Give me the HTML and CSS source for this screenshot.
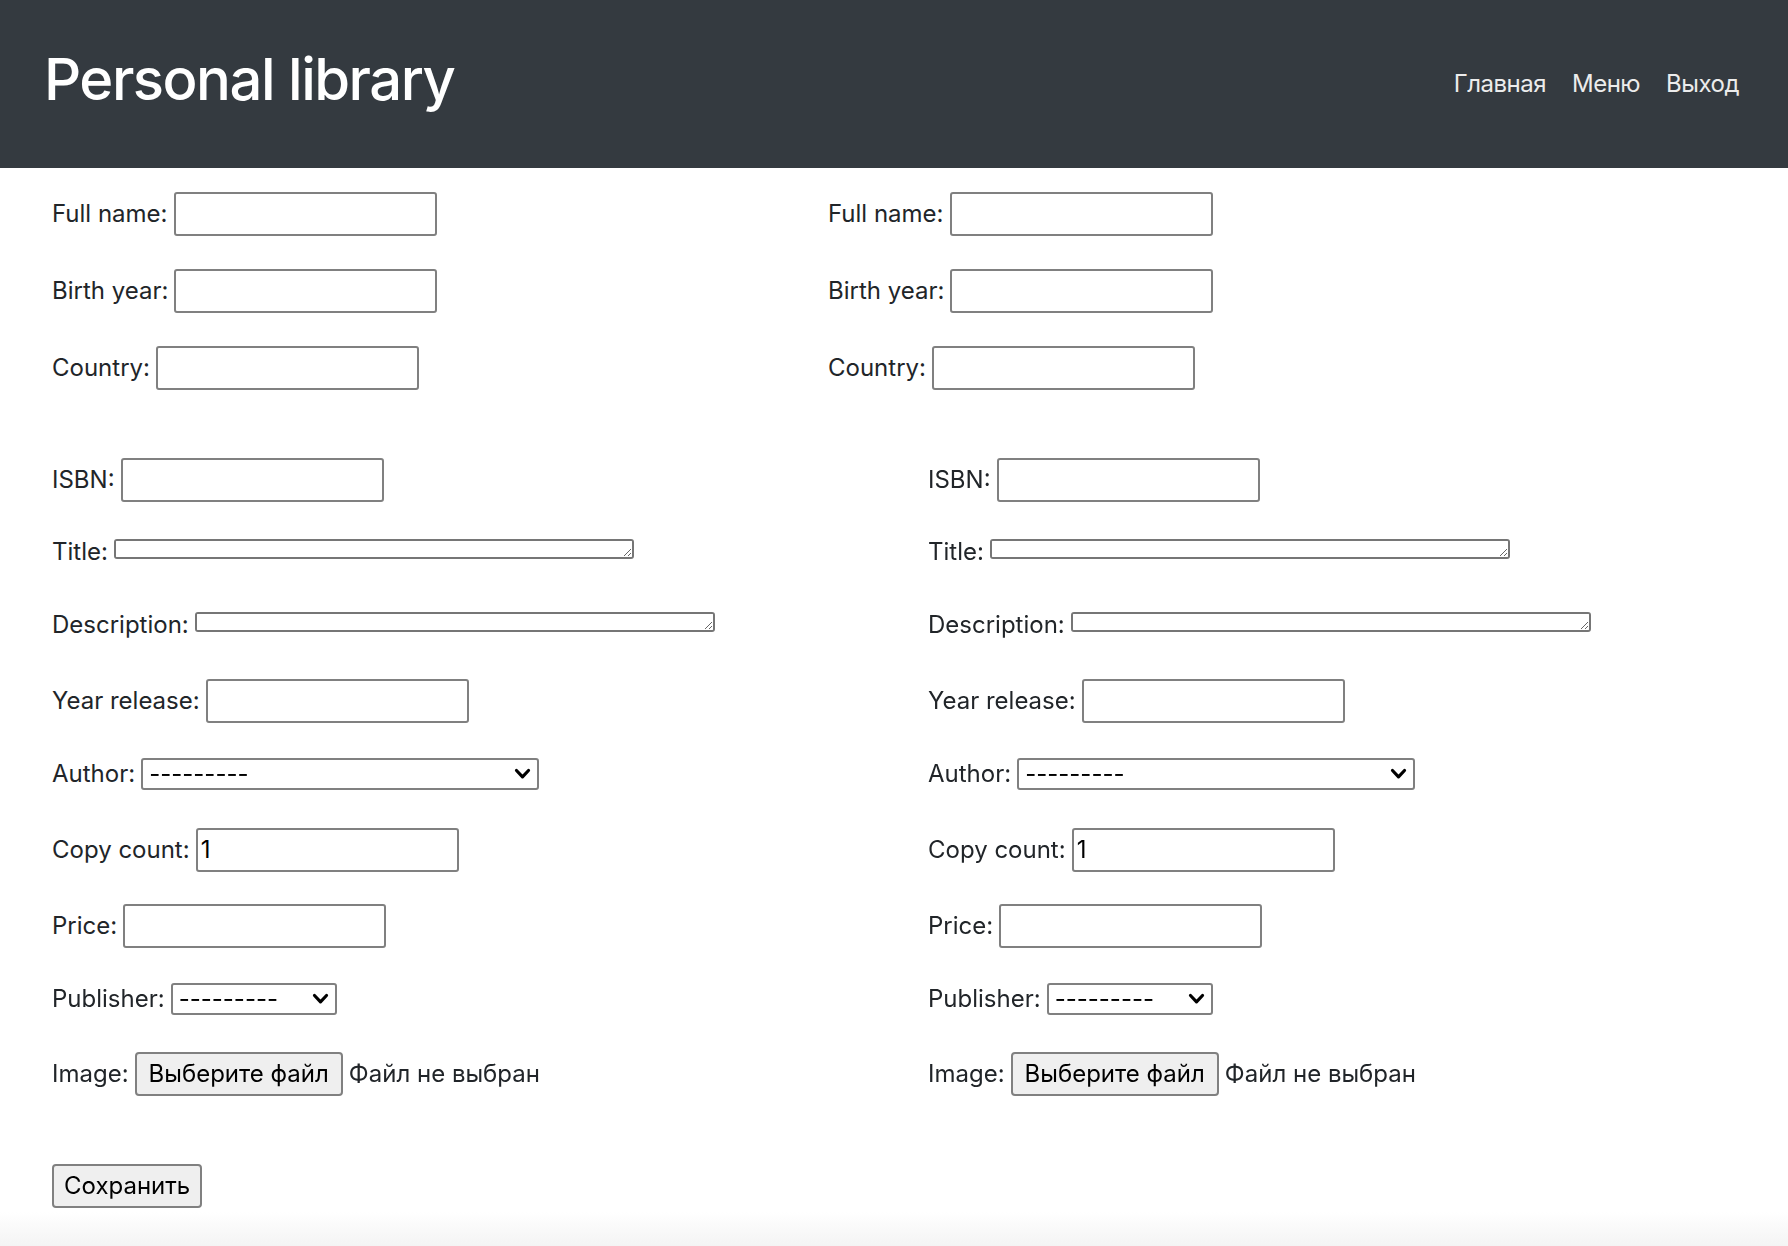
FILE: index.html
```html
<!DOCTYPE html>
<html lang="ru">
<head>
<meta charset="utf-8">
<title>Personal library</title>
<link rel="stylesheet" href="styles.css">
</head>
<body>
<header class="navbar">
  <a class="brand" href="#">Personal library</a>
  <nav class="nav">
    <a class="nav-link" href="#">Главная</a>
    <a class="nav-link" href="#">Меню</a>
    <a class="nav-link" href="#">Выход</a>
  </nav>
</header>
<main class="content">
  <form class="form">
    <section class="pair pair-authors">
      <div class="fields">
        <p class="row row-tall"><label>Full name:</label><input class="text-input" type="text"></p>
        <p class="row row-tall"><label>Birth year:</label><input class="text-input" type="text"></p>
        <p class="row row-tall"><label>Country:</label><input class="text-input" type="text"></p>
      </div>
      <div class="fields">
        <p class="row row-tall"><label>Full name:</label><input class="text-input" type="text"></p>
        <p class="row row-tall"><label>Birth year:</label><input class="text-input" type="text"></p>
        <p class="row row-tall"><label>Country:</label><input class="text-input" type="text"></p>
      </div>
    </section>
    <section class="pair pair-books">
      <div class="fields">
        <p class="row row-tall"><label>ISBN:</label><input class="text-input" type="text"></p>
        <p class="row row-area"><label>Title:</label><textarea class="text-area"></textarea></p>
        <p class="row row-area"><label>Description:</label><textarea class="text-area"></textarea></p>
        <p class="row row-tall"><label>Year release:</label><input class="text-input" type="text"></p>
        <p class="row row-select"><label>Author:</label><span class="select-wrap"><select class="select select-author"><option>---------</option></select><svg class="chevron" viewBox="0 0 17 12"><path d="M2.5 2.5 L8.5 8.8 L14.5 2.5" fill="none" stroke="#000" stroke-width="3.2" stroke-linecap="round" stroke-linejoin="round"/></svg></span></p>
        <p class="row row-tall"><label>Copy count:</label><input class="text-input" type="text" value="1"></p>
        <p class="row row-tall"><label>Price:</label><input class="text-input" type="text"></p>
        <p class="row row-select"><label>Publisher:</label><span class="select-wrap"><select class="select select-publisher"><option>---------</option></select><svg class="chevron" viewBox="0 0 17 12"><path d="M2.5 2.5 L8.5 8.8 L14.5 2.5" fill="none" stroke="#000" stroke-width="3.2" stroke-linecap="round" stroke-linejoin="round"/></svg></span></p>
        <p class="row row-tall"><label>Image:</label><button class="btn" type="button">Выберите файл</button><span class="file-status">Файл не выбран</span></p>
      </div>
      <div class="fields">
        <p class="row row-tall"><label>ISBN:</label><input class="text-input" type="text"></p>
        <p class="row row-area"><label>Title:</label><textarea class="text-area"></textarea></p>
        <p class="row row-area"><label>Description:</label><textarea class="text-area"></textarea></p>
        <p class="row row-tall"><label>Year release:</label><input class="text-input" type="text"></p>
        <p class="row row-select"><label>Author:</label><span class="select-wrap"><select class="select select-author"><option>---------</option></select><svg class="chevron" viewBox="0 0 17 12"><path d="M2.5 2.5 L8.5 8.8 L14.5 2.5" fill="none" stroke="#000" stroke-width="3.2" stroke-linecap="round" stroke-linejoin="round"/></svg></span></p>
        <p class="row row-tall"><label>Copy count:</label><input class="text-input" type="text" value="1"></p>
        <p class="row row-tall"><label>Price:</label><input class="text-input" type="text"></p>
        <p class="row row-select"><label>Publisher:</label><span class="select-wrap"><select class="select select-publisher"><option>---------</option></select><svg class="chevron" viewBox="0 0 17 12"><path d="M2.5 2.5 L8.5 8.8 L14.5 2.5" fill="none" stroke="#000" stroke-width="3.2" stroke-linecap="round" stroke-linejoin="round"/></svg></span></p>
        <p class="row row-tall"><label>Image:</label><button class="btn" type="button">Выберите файл</button><span class="file-status">Файл не выбран</span></p>
      </div>
    </section>
    <div class="actions">
      <button class="btn btn-save" type="submit">Сохранить</button>
    </div>
  </form>
</main>
<footer class="footer"></footer>
</body>
</html>
```

FILE: styles.css
```css
* {
  box-sizing: border-box;
}

html, body {
  overflow: hidden;
}

body {
  margin: 0;
  font-family: Inter, "Noto Sans", "Liberation Sans", sans-serif;
  font-size: 24px;
  line-height: 36px;
  color: #212529;
  background: #fff;
}

.navbar {
  height: 168px;
  background: #343a40;
  display: flex;
  justify-content: space-between;
  align-items: flex-start;
  padding: 0 49px 0 44px;
}

.brand {
  margin-top: 43px;
  font-size: 58px;
  line-height: 72px;
  font-weight: 500;
  letter-spacing: -1.5px;
  color: #fff;
  text-decoration: none;
}

.nav {
  margin-top: 66px;
  display: flex;
  gap: 26px;
}

.nav-link {
  color: #ececec;
  letter-spacing: -0.5px;
  text-decoration: none;
}

.content {
  padding: 24px 0 0 52px;
}

.form {
  margin: 0;
}

.pair {
  display: grid;
}

.pair-authors {
  grid-template-columns: 776px auto;
}

.pair-books {
  grid-template-columns: 876px auto;
  margin-top: 68px;
}

.fields {
  display: flex;
  flex-direction: column;
  align-items: flex-start;
  gap: 31.8px;
}

.pair-authors .fields {
  gap: 33px;
}

.row {
  margin: 0;
  display: flex;
  gap: 6px;
  white-space: nowrap;
}

.row-tall {
  height: 44px;
  align-items: center;
}

.row-area {
  height: 41px;
  align-items: flex-start;
}

.row-select {
  height: 41px;
  padding-top: 1px;
  align-items: flex-start;
}

.text-input {
  width: 263px;
  height: 44px;
  margin: 0;
  border: 2px solid #808080;
  border-radius: 3px;
  padding: 0 3px;
  font: inherit;
  color: #000;
  background: #fff;
}

.text-area {
  width: 520px;
  height: 20px;
  margin: 5px 0 0;
  border: 2px solid #767676;
  border-radius: 3px;
  padding: 0;
  font: inherit;
  resize: both;
  background: #fff;
}

.select-wrap {
  position: relative;
  display: inline-flex;
  margin-top: 2px;
}

.select {
  appearance: none;
  -webkit-appearance: none;
  height: 32px;
  margin: 0;
  border: 2px solid #808080;
  border-radius: 3px;
  padding: 0 6px;
  font: inherit;
  line-height: 28px;
  color: #000;
  background: #fff;
}

.select-author {
  width: 398px;
}

.select-publisher {
  width: 166px;
}

.chevron {
  position: absolute;
  right: 8px;
  top: 10px;
  width: 17px;
  height: 12px;
  pointer-events: none;
}

.btn {
  height: 44px;
  margin: 0;
  padding: 0 12px;
  border: 2px solid #808080;
  border-radius: 4px;
  background: #efefef;
  font: inherit;
  color: #000;
}

.btn-save {
  padding: 0 10px;
}

.actions {
  display: flex;
  margin-top: 68px;
}

.footer {
  position: fixed;
  left: 0;
  right: 0;
  bottom: 0;
  height: 34px;
  background: linear-gradient(#ffffff, #f4f4f4);
}
```
